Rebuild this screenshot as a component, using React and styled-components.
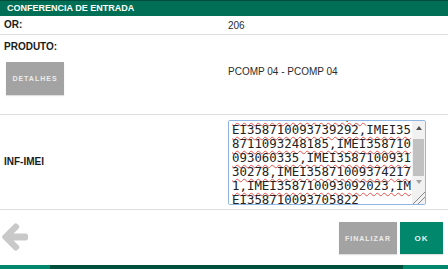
import { useEffect, useRef } from "react";
import styled, { createGlobalStyle } from "styled-components";

const GlobalStyle = createGlobalStyle`
  html, body { margin: 0; padding: 0; background: #fff; }
  body { font-family: "Liberation Sans", Arial, sans-serif; }
  * { box-sizing: border-box; }
`;

const Page = styled.div`
  display: flex;
  flex-direction: column;
  height: 100vh;
  overflow: hidden;
`;

const Header = styled.div`
  height: 16px;
  background: #006f56;
  border-top: 1px solid #004c3b;
  color: #fff;
  font-size: 9px;
  font-weight: bold;
  line-height: 15px;
  padding-left: 7px;
`;

const Row = styled.div`
  display: grid;
  grid-template-columns: 228px 1fr;
  min-height: ${(p) => p.$h}px;
  border-bottom: 1px solid #dddddd;
`;

const LabelCell = styled.div`
  display: flex;
  flex-direction: column;
  justify-content: ${(p) => (p.$top ? "flex-start" : "center")};
  padding: ${(p) => (p.$top ? "6px 4px 0" : "0 4px")};
`;

const Label = styled.span`
  font-size: 10px;
  font-weight: bold;
  color: #1b1b1b;
  line-height: 12px;
`;

const ValueCell = styled.div`
  display: flex;
  align-items: center;
  padding-bottom: ${(p) => p.$shift || 0}px;
  font-size: 10px;
  color: #2b2b2b;
`;

const GrayButton = styled.button`
  border: none;
  background: #a3a3a3;
  color: #ececec;
  font-family: "Liberation Sans", Arial, sans-serif;
  font-size: 7px;
  font-weight: bold;
  letter-spacing: 1px;
  width: 58px;
  height: 33px;
  padding: 0;
  box-shadow: 0 1px 1px rgba(0, 0, 0, 0.12);
`;

const DetailButton = styled(GrayButton)`
  margin: 9px 0 0 2px;
`;

const ImeiField = styled.div`
  display: flex;
  width: 198px;
  height: 85px;
  margin: 5px 0 4px;
  border: 1px solid #8fb6e3;
  border-radius: 2px;
  overflow: hidden;
`;

const ImeiBox = styled.textarea`
  flex: 1;
  min-width: 0;
  border: none;
  padding: 2px 0 2px 3px;
  font-family: "DejaVu Sans Mono", monospace;
  font-size: 12.4px;
  line-height: 14px;
  color: #222;
  resize: none;
  outline: none;
  overflow: hidden;
  text-decoration: underline wavy #e8504a;
  text-decoration-thickness: 1px;
  text-underline-offset: 2px;
  text-decoration-skip-ink: none;
`;

const ScrollBar = styled.div`
  width: 13px;
  display: flex;
  flex-direction: column;
  background: #f1f1f1;
`;

const ScrollArrow = styled.div`
  height: ${(p) => (p.$down ? 12 : 14)}px;
  display: flex;
  align-items: center;
  justify-content: center;

  &::before {
    content: "";
    border-left: 3.5px solid transparent;
    border-right: 3.5px solid transparent;
    ${(p) =>
      p.$down
        ? "border-top: 4px solid #a3a3a3;"
        : "border-bottom: 4px solid #505050;"}
  }
`;

const ScrollTrack = styled.div`
  flex: 1;
  padding: 4px 1px 0;
`;

const ScrollThumb = styled.div`
  height: 37px;
  background: #c1c1c1;
`;

const Resizer = styled.div`
  height: 16px;
  background: linear-gradient(
    135deg,
    #f1f1f1 56%,
    #8a8a8a 56%,
    #8a8a8a 61%,
    #f1f1f1 61%,
    #f1f1f1 74%,
    #8a8a8a 74%,
    #8a8a8a 79%,
    #f1f1f1 79%
  );
`;

const Footer = styled.div`
  flex: 1;
  display: flex;
  justify-content: space-between;
  align-items: flex-start;
  padding: 12px 5px 0 2px;
`;

const Back = styled.svg`
  width: 26px;
  height: 28px;
  margin-top: 1px;
  fill: #c9c9c9;
`;

const Actions = styled.div`
  display: flex;
  gap: 3px;
`;

const OkButton = styled(GrayButton)`
  width: 43px;
  height: 32px;
  background: #00876c;
  color: #e6f3ef;
  font-size: 8px;
`;

const FinishButton = styled(GrayButton)`
  height: 32px;
`;

const BottomBar = styled.div`
  display: flex;
  height: 4px;
`;

const BarPart = styled.div`
  width: ${(p) => (p.$w ? `${p.$w}px` : "auto")};
  flex: ${(p) => (p.$w ? "none" : 1)};
  background: ${(p) => (p.$dark ? "#004f3d" : "#00876c")};
`;

const imeis =
  "IMEI358710093721045,IMEI358710093728195,IM\n" +
  "EI358710093739292,IMEI358711093248185,IMEI358710093060335,IMEI358710093130278,IMEI358710093742171,IMEI358710093092023,IMEI358710093705822";

export default function App() {
  const boxRef = useRef(null);

  useEffect(() => {
    if (boxRef.current) boxRef.current.scrollTop = 28;
  }, []);

  return (
    <Page>
      <GlobalStyle />
      <Header>CONFERENCIA DE ENTRADA</Header>

      <Row $h={19}>
        <LabelCell>
          <Label>OR:</Label>
        </LabelCell>
        <ValueCell>206</ValueCell>
      </Row>

      <Row $h={80}>
        <LabelCell $top>
          <Label>PRODUTO:</Label>
          <DetailButton>DETALHES</DetailButton>
        </LabelCell>
        <ValueCell $shift={7}>PCOMP 04 - PCOMP 04</ValueCell>
      </Row>

      <Row $h={94}>
        <LabelCell>
          <Label>INF-IMEI</Label>
        </LabelCell>
        <ValueCell>
          <ImeiField>
            <ImeiBox ref={boxRef} defaultValue={imeis} spellCheck />
            <ScrollBar>
              <ScrollArrow />
              <ScrollTrack>
                <ScrollThumb />
              </ScrollTrack>
              <ScrollArrow $down />
              <Resizer />
            </ScrollBar>
          </ImeiField>
        </ValueCell>
      </Row>

      <Footer>
        <Back viewBox="192 181 1472 1558">
          <path d="M1664 896v128q0 53-32.5 90.5t-84.5 37.5h-704l293 294q38 36 38 90t-38 90l-75 76q-37 37-90 37-52 0-91-37l-651-652q-37-37-37-90 0-52 37-91l651-650q38-38 91-38 52 0 90 38l75 74q38 38 38 91t-38 91l-293 293h704q52 0 84.5 37.5t32.5 90.5z" />
        </Back>
        <Actions>
          <FinishButton>FINALIZAR</FinishButton>
          <OkButton>OK</OkButton>
        </Actions>
      </Footer>

      <BottomBar>
        <BarPart $w={50} />
        <BarPart $w={353} $dark />
        <BarPart />
      </BottomBar>
    </Page>
  );
}
